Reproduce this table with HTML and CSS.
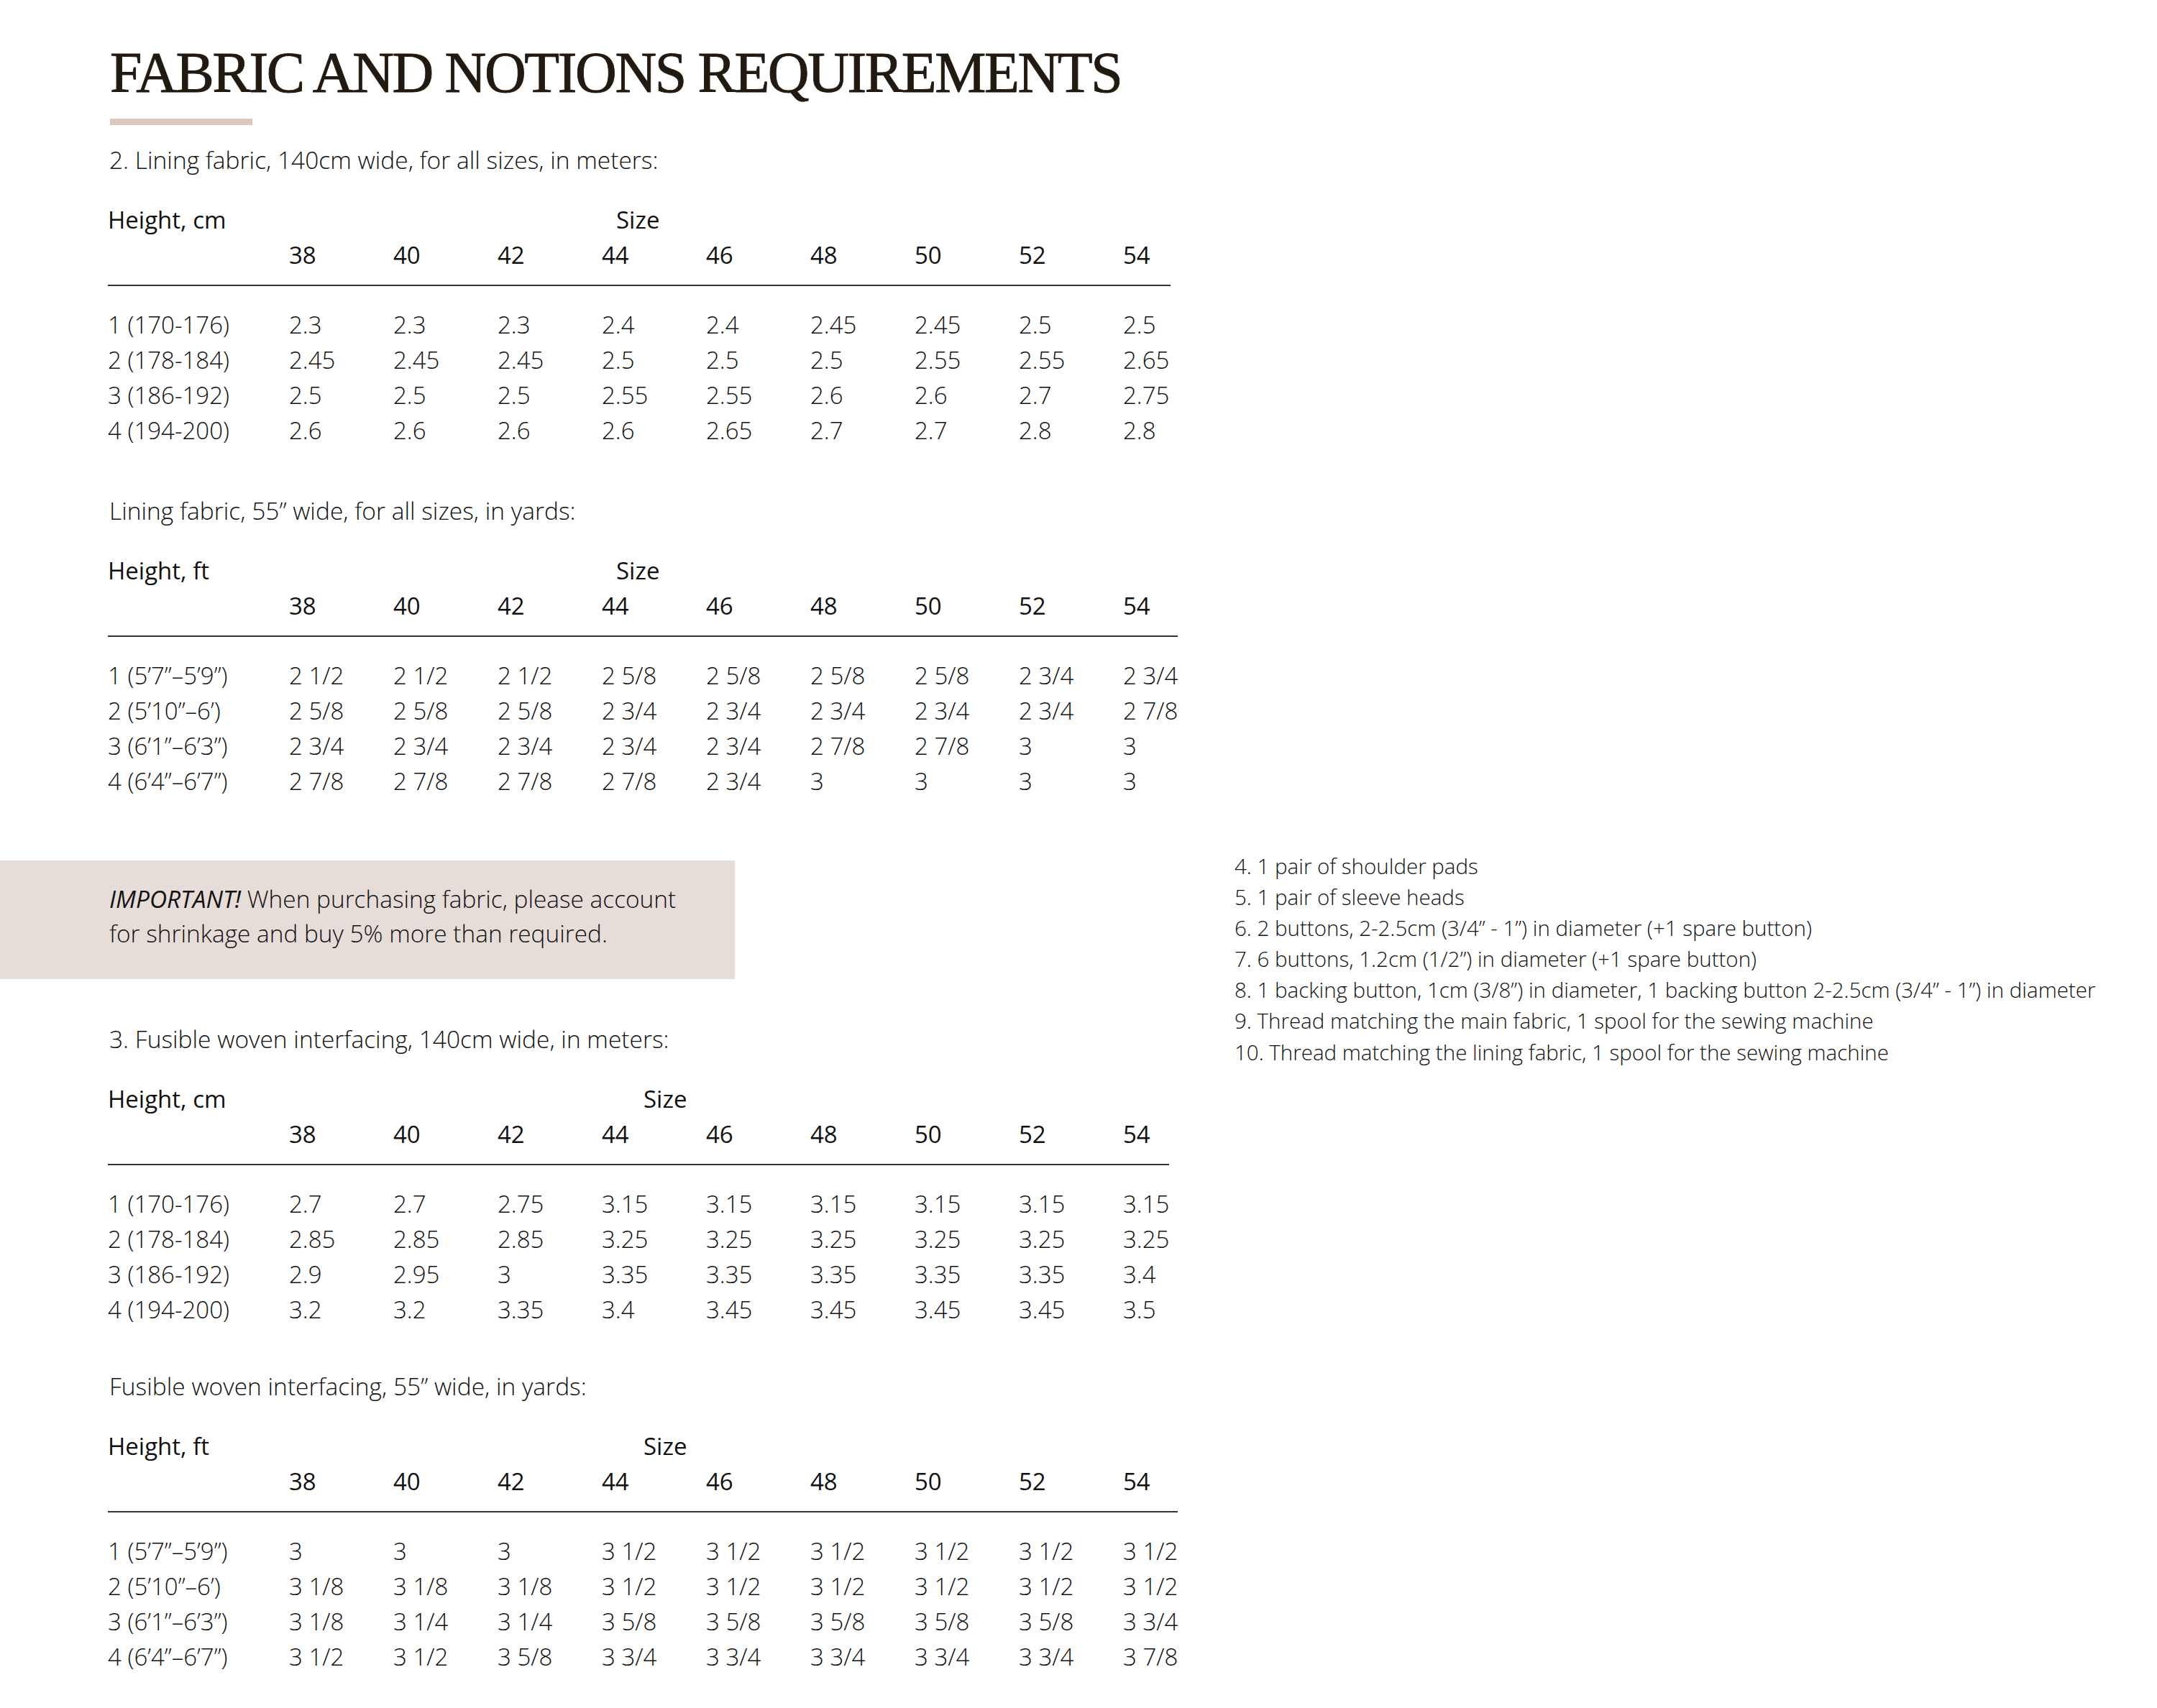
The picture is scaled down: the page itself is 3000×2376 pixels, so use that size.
FILE: index.html
```html
<!DOCTYPE html>
<html lang="en">
<head>
<meta charset="utf-8">
<title>Fabric and notions requirements</title>
<link rel="stylesheet" href="styles.css">
</head>
<body>
<main class="page">
  <h1 class="title">FABRIC AND NOTIONS REQUIREMENTS</h1>
  <div class="accent"></div>

  <section class="block">
    <p class="caption">2. Lining fabric, 140cm wide, for all sizes, in meters:</p>
    <div class="thead w-a">
      <div class="row"><span class="lab hd">Height, cm</span><span class="size-label hd">Size</span></div>
      <div class="row hd"><span class="lab"></span><span>38</span><span>40</span><span>42</span><span>44</span><span>46</span><span>48</span><span>50</span><span>52</span><span>54</span></div>
    </div>
    <div class="tbody">
      <div class="row"><span class="lab">1 (170-176)</span><span>2.3</span><span>2.3</span><span>2.3</span><span>2.4</span><span>2.4</span><span>2.45</span><span>2.45</span><span>2.5</span><span>2.5</span></div>
      <div class="row"><span class="lab">2 (178-184)</span><span>2.45</span><span>2.45</span><span>2.45</span><span>2.5</span><span>2.5</span><span>2.5</span><span>2.55</span><span>2.55</span><span>2.65</span></div>
      <div class="row"><span class="lab">3 (186-192)</span><span>2.5</span><span>2.5</span><span>2.5</span><span>2.55</span><span>2.55</span><span>2.6</span><span>2.6</span><span>2.7</span><span>2.75</span></div>
      <div class="row"><span class="lab">4 (194-200)</span><span>2.6</span><span>2.6</span><span>2.6</span><span>2.6</span><span>2.65</span><span>2.7</span><span>2.7</span><span>2.8</span><span>2.8</span></div>
    </div>
  </section>

  <section class="block block-second">
    <p class="caption">Lining fabric, 55” wide, for all sizes, in yards:</p>
    <div class="thead w-b">
      <div class="row"><span class="lab hd">Height, ft</span><span class="size-label hd">Size</span></div>
      <div class="row hd"><span class="lab"></span><span>38</span><span>40</span><span>42</span><span>44</span><span>46</span><span>48</span><span>50</span><span>52</span><span>54</span></div>
    </div>
    <div class="tbody">
      <div class="row"><span class="lab">1 (5’7”–5’9”)</span><span>2 1/2</span><span>2 1/2</span><span>2 1/2</span><span>2 5/8</span><span>2 5/8</span><span>2 5/8</span><span>2 5/8</span><span>2 3/4</span><span>2 3/4</span></div>
      <div class="row"><span class="lab">2 (5’10”–6’)</span><span>2 5/8</span><span>2 5/8</span><span>2 5/8</span><span>2 3/4</span><span>2 3/4</span><span>2 3/4</span><span>2 3/4</span><span>2 3/4</span><span>2 7/8</span></div>
      <div class="row"><span class="lab">3 (6’1”–6’3”)</span><span>2 3/4</span><span>2 3/4</span><span>2 3/4</span><span>2 3/4</span><span>2 3/4</span><span>2 7/8</span><span>2 7/8</span><span>3</span><span>3</span></div>
      <div class="row"><span class="lab">4 (6’4”–6’7”)</span><span>2 7/8</span><span>2 7/8</span><span>2 7/8</span><span>2 7/8</span><span>2 3/4</span><span>3</span><span>3</span><span>3</span><span>3</span></div>
    </div>
  </section>

  <div class="note-row">
    <div class="note">
      <p><em>IMPORTANT!</em> When purchasing fabric, please account<br>for shrinkage and buy 5% more than required.</p>
    </div>
    <ul class="notions">
      <li>4. 1 pair of shoulder pads</li>
      <li>5. 1 pair of sleeve heads</li>
      <li>6. 2 buttons, 2-2.5cm (3/4” - 1”) in diameter (+1 spare button)</li>
      <li>7. 6 buttons, 1.2cm (1/2”) in diameter (+1 spare button)</li>
      <li>8. 1 backing button, 1cm (3/8”) in diameter, 1 backing button 2-2.5cm (3/4” - 1”) in diameter</li>
      <li>9. Thread matching the main fabric, 1 spool for the sewing machine</li>
      <li>10. Thread matching the lining fabric, 1 spool for the sewing machine</li>
    </ul>
  </div>

  <section class="block block-third">
    <p class="caption">3. Fusible woven interfacing, 140cm wide, in meters:</p>
    <div class="thead w-c">
      <div class="row"><span class="lab hd">Height, cm</span><span class="size-label size-label-wide hd">Size</span></div>
      <div class="row hd"><span class="lab"></span><span>38</span><span>40</span><span>42</span><span>44</span><span>46</span><span>48</span><span>50</span><span>52</span><span>54</span></div>
    </div>
    <div class="tbody">
      <div class="row"><span class="lab">1 (170-176)</span><span>2.7</span><span>2.7</span><span>2.75</span><span>3.15</span><span>3.15</span><span>3.15</span><span>3.15</span><span>3.15</span><span>3.15</span></div>
      <div class="row"><span class="lab">2 (178-184)</span><span>2.85</span><span>2.85</span><span>2.85</span><span>3.25</span><span>3.25</span><span>3.25</span><span>3.25</span><span>3.25</span><span>3.25</span></div>
      <div class="row"><span class="lab">3 (186-192)</span><span>2.9</span><span>2.95</span><span>3</span><span>3.35</span><span>3.35</span><span>3.35</span><span>3.35</span><span>3.35</span><span>3.4</span></div>
      <div class="row"><span class="lab">4 (194-200)</span><span>3.2</span><span>3.2</span><span>3.35</span><span>3.4</span><span>3.45</span><span>3.45</span><span>3.45</span><span>3.45</span><span>3.5</span></div>
    </div>
  </section>

  <section class="block block-fourth">
    <p class="caption">Fusible woven interfacing, 55” wide, in yards:</p>
    <div class="thead w-b">
      <div class="row"><span class="lab hd">Height, ft</span><span class="size-label size-label-wide hd">Size</span></div>
      <div class="row hd"><span class="lab"></span><span>38</span><span>40</span><span>42</span><span>44</span><span>46</span><span>48</span><span>50</span><span>52</span><span>54</span></div>
    </div>
    <div class="tbody">
      <div class="row"><span class="lab">1 (5’7”–5’9”)</span><span>3</span><span>3</span><span>3</span><span>3 1/2</span><span>3 1/2</span><span>3 1/2</span><span>3 1/2</span><span>3 1/2</span><span>3 1/2</span></div>
      <div class="row"><span class="lab">2 (5’10”–6’)</span><span>3 1/8</span><span>3 1/8</span><span>3 1/8</span><span>3 1/2</span><span>3 1/2</span><span>3 1/2</span><span>3 1/2</span><span>3 1/2</span><span>3 1/2</span></div>
      <div class="row"><span class="lab">3 (6’1”–6’3”)</span><span>3 1/8</span><span>3 1/4</span><span>3 1/4</span><span>3 5/8</span><span>3 5/8</span><span>3 5/8</span><span>3 5/8</span><span>3 5/8</span><span>3 3/4</span></div>
      <div class="row"><span class="lab">4 (6’4”–6’7”)</span><span>3 1/2</span><span>3 1/2</span><span>3 5/8</span><span>3 3/4</span><span>3 3/4</span><span>3 3/4</span><span>3 3/4</span><span>3 3/4</span><span>3 7/8</span></div>
    </div>
  </section>
</main>
</body>
</html>
```
FILE: styles.css
```css
* { box-sizing: border-box; }
html, body { margin: 0; padding: 0; background: #ffffff; }
body {
  font-family: "Open Sans", "Liberation Sans", sans-serif;
  font-weight: 300;
  color: #121212;
  width: 3000px;
  height: 2376px;
  overflow: hidden;
}
.page { padding: 61px 0 0 0; }

.title {
  margin: 0 0 0 153px;
  font-family: "Liberation Serif", "DejaVu Serif", serif;
  font-weight: 400;
  font-size: 80px;
  line-height: 80px;
  color: #221910;
  letter-spacing: -2.4px;
  -webkit-text-stroke: 0.9px #221910;
  white-space: nowrap;
}
.accent {
  margin: 24px 0 0 153px;
  width: 198px;
  height: 9px;
  background: #dcc7c1;
}

.block { margin-left: 150px; }
.block:first-of-type { margin-top: 24px; }
.block-second { margin-top: 63px; }
.block-third { margin-top: 59px; }
.block-fourth { margin-top: 58px; }

.caption {
  margin: 0 0 34px 2px;
  font-size: 33.5px;
  line-height: 49px;
  font-weight: 300;
}

.row {
  display: grid;
  grid-template-columns: 252px repeat(9, 145px);
  font-size: 33px;
  line-height: 49px;
  white-space: nowrap;
}
.hd { font-weight: 400; color: #111111; }
.lab { grid-column: 1; }
.size-label { grid-column: 5 / span 3; padding-left: 20px; }
.size-label-wide { padding-left: 58px; }

.thead {
  padding-bottom: 17px;
  border-bottom: 2px solid #333333;
}
.w-a { width: 1478px; }
.w-b { width: 1488px; }
.w-c { width: 1476px; }
.tbody { margin-top: 29px; }

.note-row {
  display: flex;
  align-items: flex-start;
  height: 179px;
  margin-top: 72px;
}
.note {
  flex: none;
  width: 1022px;
  height: 165px;
  margin-top: 14px;
  background: #e6ddd9;
  padding: 29px 0 0 152px;
}
.note p {
  margin: 0;
  font-size: 33.4px;
  line-height: 48px;
}
.note em { font-style: italic; font-weight: 400; }

.notions {
  list-style: none;
  margin: 0 0 0 695px;
  padding: 0;
  font-size: 29.5px;
  line-height: 43.1px;
  white-space: nowrap;
}
```
